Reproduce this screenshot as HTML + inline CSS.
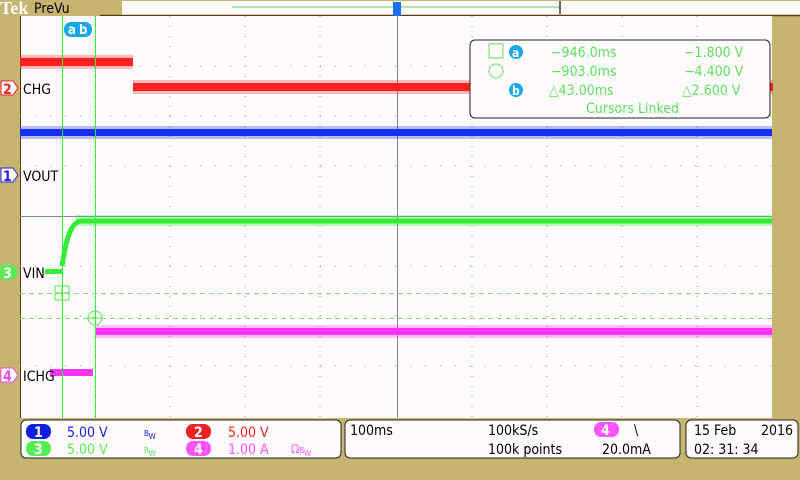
<!DOCTYPE html>
<html><head><meta charset="utf-8"><style>
body{margin:0;width:800px;height:480px;background:#c7b470;overflow:hidden;font-family:"DejaVu Sans","Liberation Sans",sans-serif}
svg{position:absolute;left:0;top:0}
text{font-family:"DejaVu Sans Condensed","DejaVu Sans","Liberation Sans",sans-serif}
text.tek{font-family:"Liberation Serif",serif;font-size:18px;font-weight:bold}
</style></head><body>
<svg width="800" height="480" viewBox="0 0 800 480">
<text class="tek" x="0" y="14" fill="#fff">Tek</text>
<text x="34" y="13" font-size="14" fill="#000">PreVu</text>
<rect x="122" y="1" width="678" height="14" fill="#fffbfd"/>
<line x1="100" y1="15.5" x2="800" y2="15.5" stroke="#5a3a10" stroke-width="1.5"/>
<line x1="232" y1="7" x2="560" y2="7" stroke="#6c6" stroke-width="1"/>
<rect x="559" y="1" width="2" height="13" fill="#666"/>
<rect x="393" y="2" width="8" height="14" fill="#1a6ef0"/>
<path d="M393 16 L401 16 L397 22 Z" fill="#1a6ef0"/>
<rect x="20" y="16" width="752" height="402" fill="#fffbfd"/>
<line x1="20.5" y1="16" x2="20.5" y2="418" stroke="#5a3a10" stroke-width="1"/>
<g stroke="#8890a8" stroke-width="1" stroke-dasharray="1 14">
<line x1="20" y1="66" x2="772" y2="66"/><line x1="20" y1="116" x2="772" y2="116"/><line x1="20" y1="166" x2="772" y2="166"/>
<line x1="20" y1="266" x2="772" y2="266"/><line x1="20" y1="316" x2="772" y2="316"/><line x1="20" y1="366" x2="772" y2="366"/>
</g>
<g stroke="#8890a8" stroke-width="1" stroke-dasharray="1 9">
<line x1="95" y1="16" x2="95" y2="418"/><line x1="170" y1="16" x2="170" y2="418"/><line x1="245" y1="16" x2="245" y2="418"/><line x1="320" y1="16" x2="320" y2="418"/>
<line x1="472" y1="16" x2="472" y2="418"/><line x1="547" y1="16" x2="547" y2="418"/><line x1="622" y1="16" x2="622" y2="418"/><line x1="697" y1="16" x2="697" y2="418"/>
</g>
<line x1="20" y1="216.5" x2="772" y2="216.5" stroke="#7a82a0" stroke-width="1"/>
<line x1="397.5" y1="16" x2="397.5" y2="418" stroke="#7a82a0" stroke-width="1"/>
<line x1="20" y1="293.5" x2="772" y2="293.5" stroke="#7ed87e" stroke-dasharray="5 4"/>
<line x1="20" y1="318.5" x2="772" y2="318.5" stroke="#7ed87e" stroke-dasharray="5 4"/>
<rect x="20" y="58" width="113" height="8" fill="#f22"/>
<rect x="20" y="55" width="113" height="14" fill="#f22" opacity=".3"/>
<rect x="133" y="83" width="640" height="8" fill="#f22"/>
<rect x="133" y="80" width="640" height="14" fill="#f22" opacity=".3"/>
<rect x="20" y="129" width="752" height="7" fill="#1530ee"/>
<rect x="20" y="126" width="752" height="13" fill="#1530ee" opacity=".3"/>
<rect x="45" y="269" width="17" height="5" fill="#3e3"/>
<path d="M62 266 C66 240 70 224 80 221 L772 221" stroke="#3e3" stroke-width="5" fill="none"/>
<rect x="75" y="215" width="697" height="11" fill="#3e3" opacity=".35"/>
<rect x="50" y="369" width="43" height="7" fill="#f3f"/>
<rect x="95" y="328" width="677" height="7" fill="#f3f"/>
<rect x="95" y="325" width="677" height="13" fill="#f3f" opacity=".3"/>
<line x1="62.5" y1="16" x2="62.5" y2="418" stroke="#3e3"/>
<line x1="95.5" y1="16" x2="95.5" y2="418" stroke="#3e3"/>
<rect x="55" y="286" width="14" height="14" fill="none" stroke="#4e4"/>
<line x1="55" y1="293" x2="69" y2="293" stroke="#4e4"/><line x1="62" y1="286" x2="62" y2="300" stroke="#4e4"/>
<circle cx="95" cy="318" r="7" fill="none" stroke="#4e4"/>
<line x1="88" y1="318" x2="102" y2="318" stroke="#4e4"/>
<rect x="64" y="22" width="28" height="15" rx="7" fill="#15a8ec"/>
<text x="68" y="34" font-size="13" font-weight="bold" fill="#fff">a</text>
<text x="79" y="34" font-size="13" font-weight="bold" fill="#fff">b</text>
<g font-size="14" font-weight="bold">
<path d="M1 81 H13 L18 88 L13 95 H1 Z" fill="#fff" stroke="#e22"/><text x="3" y="94" fill="#e22">2</text>
<path d="M1 168 H13 L18 175 L13 182 H1 Z" fill="#fff" stroke="#22e"/><text x="3" y="181" fill="#22e">1</text>
<path d="M1 265 H13 L18 272 L13 279 H1 Z" fill="#5e5" stroke="#5e5"/><text x="3" y="278" fill="#fff">3</text>
<path d="M1 368 H13 L18 375 L13 382 H1 Z" fill="#fff" stroke="#e4e"/><text x="3" y="381" fill="#e4e">4</text>
</g>
<g font-size="14" fill="#000">
<text x="23" y="94">CHG</text><text x="23" y="181">VOUT</text><text x="23" y="278">VIN</text><text x="23" y="381">ICHG</text>
</g>
<rect x="470" y="40" width="300" height="78" rx="5" fill="#fffbfd" stroke="#222"/>
<g fill="#5de05d" font-size="14">
<rect x="489" y="44" width="14" height="14" fill="none" stroke="#5de05d"/>
<circle cx="496" cy="71" r="7" fill="none" stroke="#5de05d"/>
<text x="551" y="57">−946.0ms</text><text x="684" y="57">−1.800 V</text>
<text x="551" y="76">−903.0ms</text><text x="684" y="76">−4.400 V</text>
<text x="549" y="95">△43.00ms</text><text x="682" y="95">△2.600 V</text>
<text x="586" y="113">Cursors Linked</text>
</g>
<circle cx="516" cy="52" r="7" fill="#15a8ec"/><text x="512" y="57" font-size="12" font-weight="bold" fill="#fff">a</text>
<circle cx="516" cy="90" r="7" fill="#15a8ec"/><text x="512" y="95" font-size="12" font-weight="bold" fill="#fff">b</text>
<rect x="21" y="420" width="320" height="38" rx="5" fill="#fffbfd" stroke="#222"/>
<rect x="345" y="420" width="335" height="38" rx="5" fill="#fffbfd" stroke="#222"/>
<rect x="686" y="420" width="112" height="38" rx="5" fill="#fffbfd" stroke="#222"/>
<g font-size="14">
<rect x="26" y="424" width="25" height="15" rx="7" fill="#1020e0"/><text x="34" y="437" fill="#fff" font-weight="bold">1</text>
<text x="67" y="437" fill="#1020e0">5.00 V</text><text x="144" y="436" font-size="8" fill="#1020e0">B<tspan dy="3">W</tspan></text>
<rect x="186" y="424" width="25" height="15" rx="7" fill="#ee2222"/><text x="194" y="437" fill="#fff" font-weight="bold">2</text>
<text x="228" y="437" fill="#ee2222">5.00 V</text>
<rect x="26" y="441" width="25" height="15" rx="7" fill="#5e5"/><text x="34" y="454" fill="#fff" font-weight="bold">3</text>
<text x="67" y="454" fill="#5e5">5.00 V</text><text x="144" y="453" font-size="8" fill="#5e5">B<tspan dy="3">W</tspan></text>
<rect x="186" y="441" width="25" height="15" rx="7" fill="#f5f"/><text x="194" y="454" fill="#fff" font-weight="bold">4</text>
<text x="228" y="454" fill="#f5f">1.00 A</text><text x="291" y="453" fill="#f5f" font-size="12">Ω<tspan font-size="8">B</tspan><tspan font-size="8" dy="3">W</tspan></text>
<text x="350" y="435" fill="#000">100ms</text>
<text x="488" y="435" fill="#000">100kS/s</text>
<text x="488" y="454" fill="#000">100k points</text>
<rect x="594" y="422" width="25" height="15" rx="7" fill="#f5f"/><text x="601" y="435" fill="#fff" font-weight="bold">4</text>
<text x="634" y="435" fill="#000">\</text>
<text x="602" y="454" fill="#000">20.0mA</text>
<text x="694" y="435" fill="#000">15 Feb</text><text x="761" y="435" fill="#000">2016</text>
<text x="694" y="454" fill="#000">02: 31: 34</text>
</g>
</svg>
</body></html>
